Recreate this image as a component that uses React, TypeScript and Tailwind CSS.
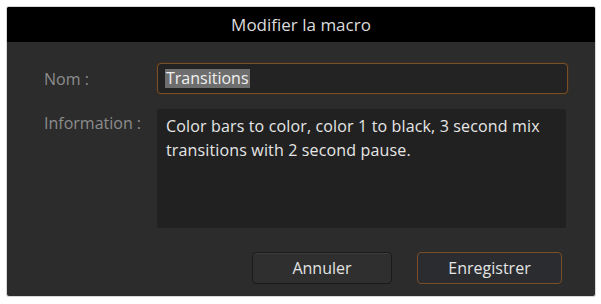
import React from "react";

export default function App() {
  return (
    <div className="w-[601px] h-[304px] bg-white pt-[6px] pl-[6px]" style={{ fontFamily: '"Open Sans", "Liberation Sans", sans-serif' }}>
      <div className="w-[590px] h-[291px] flex flex-col rounded-[3px] overflow-hidden border border-[#d8d8d8] bg-[#2c2c2c]">
        <div className="h-[35px] bg-black flex items-center justify-center text-[17px] text-[#dcdcdc]">
          Modifier la macro
        </div>
        <div className="flex-1 pl-[37px] pt-[21px]">
          <div className="flex items-center">
            <div className="w-[113px] text-[16px] text-[#8c8c8c]">Nom :</div>
            <div className="w-[411px] h-[31px] rounded-[4px] border border-[#7a4f27] bg-[#232323] flex items-center px-[7px] shadow-[0_0_2px_#5a3a1a]">
              <span className="bg-[#6e6e6e] text-[#f0f0f0] text-[16px] leading-[19px] px-[1px]">Transitions</span>
            </div>
          </div>
          <div className="flex mt-[15px]">
            <div className="w-[113px] text-[16px] leading-[24px] text-[#8c8c8c] pt-[2px]">Information :</div>
            <div className="w-[409px] h-[119px] rounded-[2px] bg-[#212121] pl-[9px] pr-[4px] pt-[5px] text-[16px] tracking-[0.15px] leading-[24px] text-[#e6e6e6]">
              Color bars to color, color 1 to black, 3 second mix transitions with 2 second pause.
            </div>
          </div>
          <div className="flex justify-end gap-[25px] mt-[24px] pr-[33px]">
            <button className="w-[140px] h-[32px] rounded-[4px] bg-[#2f2f2f] border border-[#1a1a1a] shadow-[inset_0_1px_0_#3c3c3c] text-[16px] text-[#e4e4e4]">
              Annuler
            </button>
            <button className="w-[145px] h-[32px] rounded-[4px] bg-[#2a2c30] border border-[#7a4f27] text-[16px] text-[#e4e4e4]">
              Enregistrer
            </button>
          </div>
        </div>
      </div>
    </div>
  );
}
